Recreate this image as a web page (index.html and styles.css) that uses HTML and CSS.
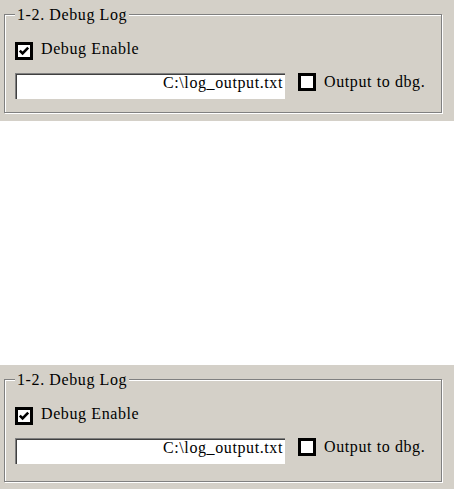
FILE: index.html
```html
<!DOCTYPE html>
<html lang="en-US">
	<head>
		<meta charset="utf-8">
		<title>Debug Log</title>
		<link rel="stylesheet" href="styles.css">
	</head>
	<body>
		<div class="panel">
			<fieldset class="group">
				<legend>1-2. Debug Log</legend>
				<div class="check-row enable-row">
					<span class="box checked"><svg viewBox="0 0 12 12" width="12" height="12"><path d="M1.8 5.6 L4.6 8.4 L10.2 2.6" fill="none" stroke="#000" stroke-width="2.6"/></svg></span>
					<span class="caption">Debug Enable</span>
				</div>
				<div class="path-row">
					<div class="textbox">C:\log_output.txt</div>
					<div class="check-row output-row">
						<span class="box"></span>
						<span class="caption">Output to dbg.</span>
					</div>
				</div>
			</fieldset>
		</div>

		<div class="panel lower">
			<fieldset class="group">
				<legend>1-2. Debug Log</legend>
				<div class="check-row enable-row">
					<span class="box checked"><svg viewBox="0 0 12 12" width="12" height="12"><path d="M1.8 5.6 L4.6 8.4 L10.2 2.6" fill="none" stroke="#000" stroke-width="2.6"/></svg></span>
					<span class="caption">Debug Enable</span>
				</div>
				<div class="path-row">
					<div class="textbox">C:\log_output.txt</div>
					<div class="check-row output-row">
						<span class="box"></span>
						<span class="caption">Output to dbg.</span>
					</div>
				</div>
			</fieldset>
		</div>
	</body>
</html>
```

FILE: styles.css
```css
body {
	background: #fff;
	color: #000;
	font-family: "Liberation Serif", "Times New Roman", serif;
	font-size: 16px;
	letter-spacing: 0.6px;
	margin: 0;
}
.panel {
	background: #d4d0c8;
	box-sizing: border-box;
	height: 121px;
	padding: 6px 0 0 4px;
}
.panel.lower {
	height: 124px;
	margin-top: 244px;
}
.group {
	border: 1px solid #808080;
	box-shadow: inset 1px 1px 0 #fff, 1px 1px 0 #fff;
	box-sizing: border-box;
	height: 107px;
	margin: 0;
	padding: 19px 0 0 10px;
	width: 438px;
}
.lower .group {
	height: 111px;
}
.group legend {
	background: #d4d0c8;
	line-height: 17px;
	padding: 0 2px;
}
.check-row {
	align-items: flex-start;
	display: flex;
}
.box {
	align-items: center;
	background: #fff;
	border: 3px solid #000;
	box-sizing: border-box;
	display: flex;
	height: 18px;
	justify-content: center;
	width: 18px;
}
.caption {
	line-height: 18px;
	margin-left: 8px;
}
.enable-row .caption {
	margin-top: -2px;
}
.path-row {
	align-items: flex-start;
	display: flex;
	margin-top: 13px;
}
.textbox {
	background: #fff;
	border-left: 1px solid #808080;
	border-top: 1px solid #808080;
	box-shadow: inset 1px 1px 0 #404040;
	box-sizing: border-box;
	height: 26px;
	line-height: 18px;
	padding-right: 2px;
	text-align: right;
	width: 270px;
}
.output-row {
	margin-left: 13px;
}
```
